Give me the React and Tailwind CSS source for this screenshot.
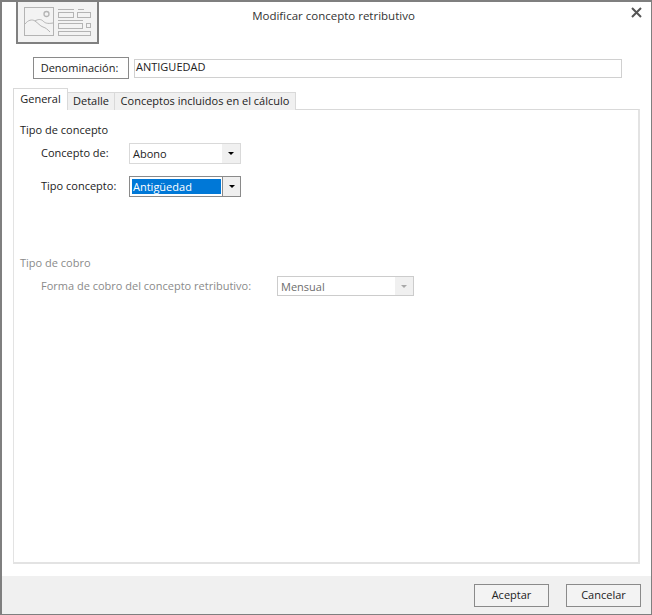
function Arrow() {
  return (
    <svg width="6" height="3" viewBox="0 0 6 3" className="block">
      <path d="M0 0h6L3 3z" fill="currentColor" />
    </svg>
  )
}

function Combo({ value, className, disabled, focused }) {
  return (
    <div className={`flex items-center border bg-white ${className} ${focused ? 'border-[#8a8a8a]' : disabled ? 'border-[#cccccc]' : 'border-[#d9d9d9]'}`}>
      <div className="flex-1 min-w-0 pl-[2px] flex items-center h-full">
        <span className={`block leading-[15px] pl-px ${focused ? 'bg-[#0078d7] text-white w-[89px]' : disabled ? 'text-[#6d6d6d]' : 'text-[#222222]'}`}>{value}</span>
      </div>
      <div className={`w-[18px] h-full flex items-center justify-center ${focused ? 'bg-[#efefef] border-l border-[#8a8a8a] text-black' : disabled ? 'bg-[#f0f0f0] text-[#a8a8a8]' : 'bg-[#f0f0f0] text-black'}`}>
        <Arrow />
      </div>
    </div>
  )
}

export default function App() {
  return (
    <div className="w-[652px] h-[615px] flex flex-col bg-white border border-[#7f7f7f] border-l-2 border-t-2 text-[11px] text-[#222222] overflow-hidden font-['Open_Sans','Liberation_Sans',sans-serif]">
      {/* header */}
      <div className="h-[41px] flex items-start">
        <div className="ml-[14px] w-[83px] h-[42px] bg-[#f3f3f3] border-2 border-t-0 border-[#808080] flex items-center justify-center shrink-0">
          <svg width="68" height="30" viewBox="0 0 68 30" fill="none" stroke="#b4b4b4" className="block">
            <rect x="0.5" y="0.5" width="29" height="28" />
            <circle cx="22.5" cy="7" r="2.5" strokeWidth="1.3" />
            <path d="M1 17c3-4 7-5 10-3s5 5 8 6c3 1 4 2 7 5M11 14c3-2 6-2 8 0s4 3 10 2" />
            <rect x="34.5" y="5.5" width="15" height="5" />
            <rect x="53.5" y="5.5" width="13" height="5" />
            <rect x="34.5" y="16.5" width="24" height="5" />
            <rect x="62.5" y="16.5" width="4" height="4" />
            <rect x="34.5" y="24.5" width="32" height="4" />
            <path d="M34 2.5h16M54 2.5h6M34 13.5h25" />
          </svg>
        </div>
        <div className="flex-1 text-center pt-[5px] pr-[54px] text-[11.5px] text-[#333333]">Modificar concepto retributivo</div>
        <div className="w-[29px] pt-[5px] pl-[9px] text-[#555555]">
          <svg width="11" height="11" viewBox="0 0 11 11" stroke="currentColor" strokeWidth="2" className="block">
            <path d="M1 1l9 9M10 1l-9 9" />
          </svg>
        </div>
      </div>

      {/* denominacion */}
      <div className="flex items-center ml-[31px] mt-[14px] h-[22px]">
        <div className="w-[96px] h-[22px] border border-[#8a8a8a] flex items-center justify-center pr-[3px]">Denominación:</div>
        <div className="ml-[5px] w-[488px] h-[19px] border border-[#d0d0d0] pl-px flex items-center leading-none pb-[3px]">ANTIGUEDAD</div>
      </div>

      {/* tabs */}
      <div className="ml-[11px] mt-[9px] flex items-end h-[22px] relative z-10">
        <div className="w-[55px] h-[22px] border border-b-0 border-[#d9d9d9] bg-white flex items-center justify-center">General</div>
        <div className="w-[47px] h-[18px] bg-[#f0f0f0] border-t border-r border-[#d9d9d9] flex items-center justify-center">Detalle</div>
        <div className="w-[181px] h-[18px] bg-[#f0f0f0] border-t border-r border-[#d9d9d9] flex items-center justify-center">Conceptos incluidos en el cálculo</div>
      </div>

      {/* panel */}
      <div className="ml-[11px] mr-[11px] -mt-px h-[455px] border-2 border-[#e3e3e3] border-t-[#d9d9d9] border-t border-l border-[#d9d9d9] flex flex-col pl-[6px]">
        <div className="mt-[12px] leading-[15px]">Tipo de concepto</div>
        <div className="mt-[6px] flex items-center h-[21px]">
          <div className="w-[109px] pl-[21px]">Concepto de:</div>
          <Combo value="Abono" className="w-[112px] h-[21px]" />
        </div>
        <div className="mt-[12px] flex items-center h-[21px]">
          <div className="w-[109px] pl-[21px]">Tipo concepto:</div>
          <Combo value="Antigüedad" focused className="w-[112px] h-[21px]" />
        </div>
        <div className="mt-[58px] leading-[15px] text-[#8a8a8a]">Tipo de cobro</div>
        <div className="mt-[6px] flex items-center h-[20px] text-[#8a8a8a]">
          <div className="w-[257px] pl-[21px]">Forma de cobro del concepto retributivo:</div>
          <Combo value="Mensual" disabled className="w-[137px] h-[20px]" />
        </div>
      </div>

      {/* footer */}
      <div className="mt-[12px] flex-1 bg-[#f0f0f0] flex items-start justify-end gap-[17px] pt-[8px] pr-[10px]">
        <button className="w-[75px] h-[23px] border border-[#8a8a8a] bg-[#f3f3f3] text-[#222222]">Aceptar</button>
        <button className="w-[75px] h-[23px] border border-[#8a8a8a] bg-[#f3f3f3] text-[#222222]">Cancelar</button>
      </div>
    </div>
  )
}
